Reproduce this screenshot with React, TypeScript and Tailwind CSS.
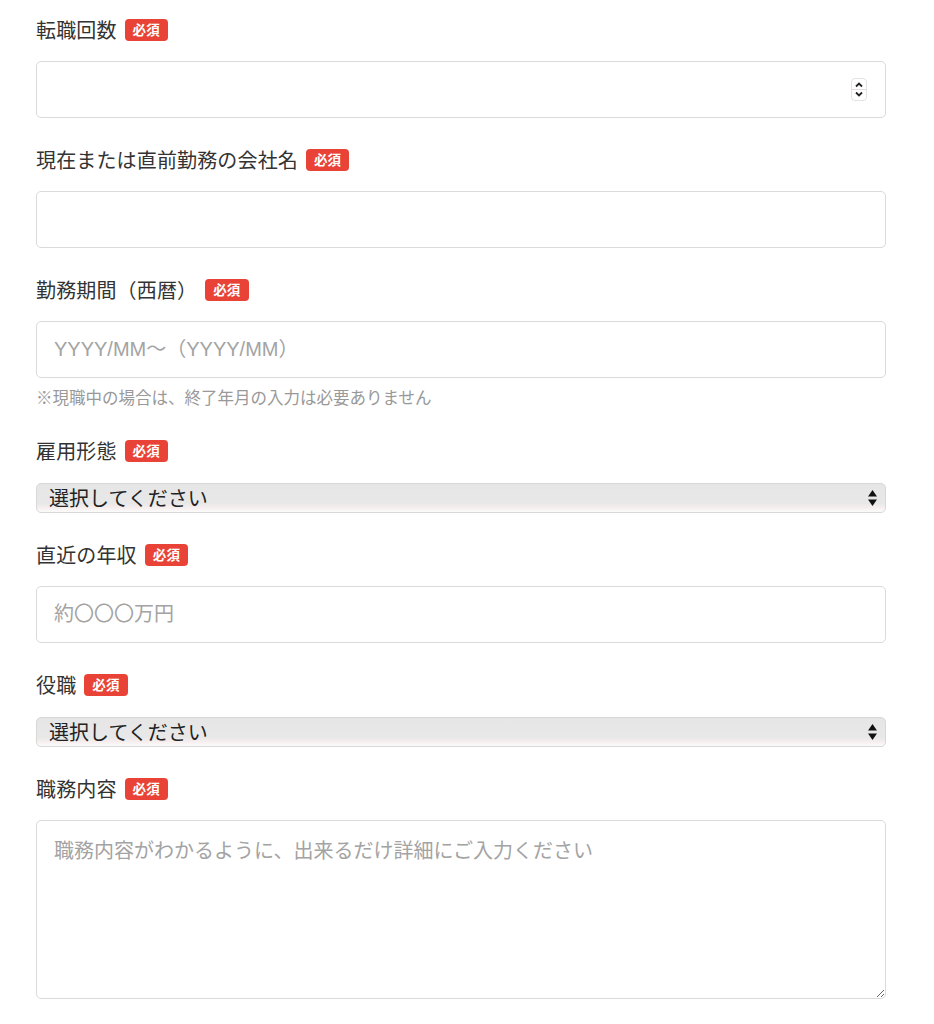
import { ReactNode } from 'react';

const font = { fontFamily: '"Noto Sans CJK JP", "Noto Sans", sans-serif' };
const inputFont = { fontFamily: '"Liberation Sans", "Noto Sans CJK JP", sans-serif' };

const Badge = () => (
    <span className="ml-[8px] inline-flex h-[22px] items-center rounded-[4px] bg-[#e84336] px-[8px] text-[13.5px] font-bold leading-none text-white">
        必須
    </span>
);

const Field = ({ label, children, note }: { label: string; children: ReactNode; note?: string }) => (
    <div className="mb-[27px]">
        <div className="mb-[16px] flex h-[30px] items-center text-[20px] leading-[30px] tracking-[0.15px] text-[#333]">
            <span>{label}</span>
            <Badge />
        </div>
        {children}
        {note && <p className="mt-[7px] text-[16.5px] leading-[24px] text-[#999]">{note}</p>}
    </div>
);

const inputCls =
    'block h-[57px] w-full rounded-[5px] border border-[#dadada] bg-white px-[17px] text-[20px] text-[#333] outline-none placeholder:text-[#a3a3a3]';

const Spinner = () => (
    <div className="pointer-events-none absolute right-[19px] top-[17px] flex h-[23px] w-[16px] flex-col items-center justify-center rounded-[4px] border border-[#e3e3e3] bg-white">
        <svg width="10" height="8" viewBox="0 0 10 8">
            <path d="M2 5.5 L5 2.5 L8 5.5" fill="none" stroke="#222" strokeWidth="1.8" />
        </svg>
        <div className="h-px w-full bg-[#eadcdc]" />
        <svg width="10" height="8" viewBox="0 0 10 8">
            <path d="M2 2.5 L5 5.5 L8 2.5" fill="none" stroke="#222" strokeWidth="1.8" />
        </svg>
    </div>
);

const Select = () => (
    <div className="relative h-[31px] w-full pt-px">
        <select
            defaultValue=""
            className="block h-[30px] w-full appearance-none rounded-[5px] border border-[#d8d8d8] bg-[linear-gradient(#e6e6e6_0%,#e8e8e8_70%,#f7eeee_85%,#fbfbfb_100%)] pl-[12px] text-[20px] leading-[28px] text-[#222] outline-none"
            style={font}
        >
            <option value="">選択してください</option>
        </select>
        <svg className="pointer-events-none absolute right-[8px] top-[7px]" width="11" height="18" viewBox="0 0 11 18">
            <path d="M5.5 1 L10 7.5 L1 7.5 Z" fill="#111" />
            <path d="M5.5 17 L10 10.5 L1 10.5 Z" fill="#111" />
        </svg>
    </div>
);

const App = () => {
    return (
        <div className="min-h-screen bg-white pt-[15px]" style={font}>
            <div className="ml-[36px] w-[850px]">
                <Field label="転職回数">
                    <div className="relative">
                        <input type="text" className={inputCls} style={inputFont} />
                        <Spinner />
                    </div>
                </Field>
                <Field label="現在または直前勤務の会社名">
                    <input type="text" className={inputCls} style={inputFont} />
                </Field>
                <Field label="勤務期間（西暦）" note="※現職中の場合は、終了年月の入力は必要ありません">
                    <input type="text" placeholder="YYYY/MM～（YYYY/MM）" className={inputCls} style={inputFont} />
                </Field>
                <Field label="雇用形態">
                    <Select />
                </Field>
                <Field label="直近の年収">
                    <input type="text" placeholder="約〇〇〇万円" className={inputCls} style={inputFont} />
                </Field>
                <Field label="役職">
                    <Select />
                </Field>
                <Field label="職務内容">
                    <textarea
                        placeholder="職務内容がわかるように、出来るだけ詳細にご入力ください"
                        className="block h-[179px] w-full rounded-[5px] border border-[#dadada] bg-white px-[17px] py-[14px] text-[20px] leading-[30px] text-[#333] outline-none placeholder:text-[#a3a3a3]"
                        style={font}
                    />
                </Field>
            </div>
        </div>
    );
};

export default App;
